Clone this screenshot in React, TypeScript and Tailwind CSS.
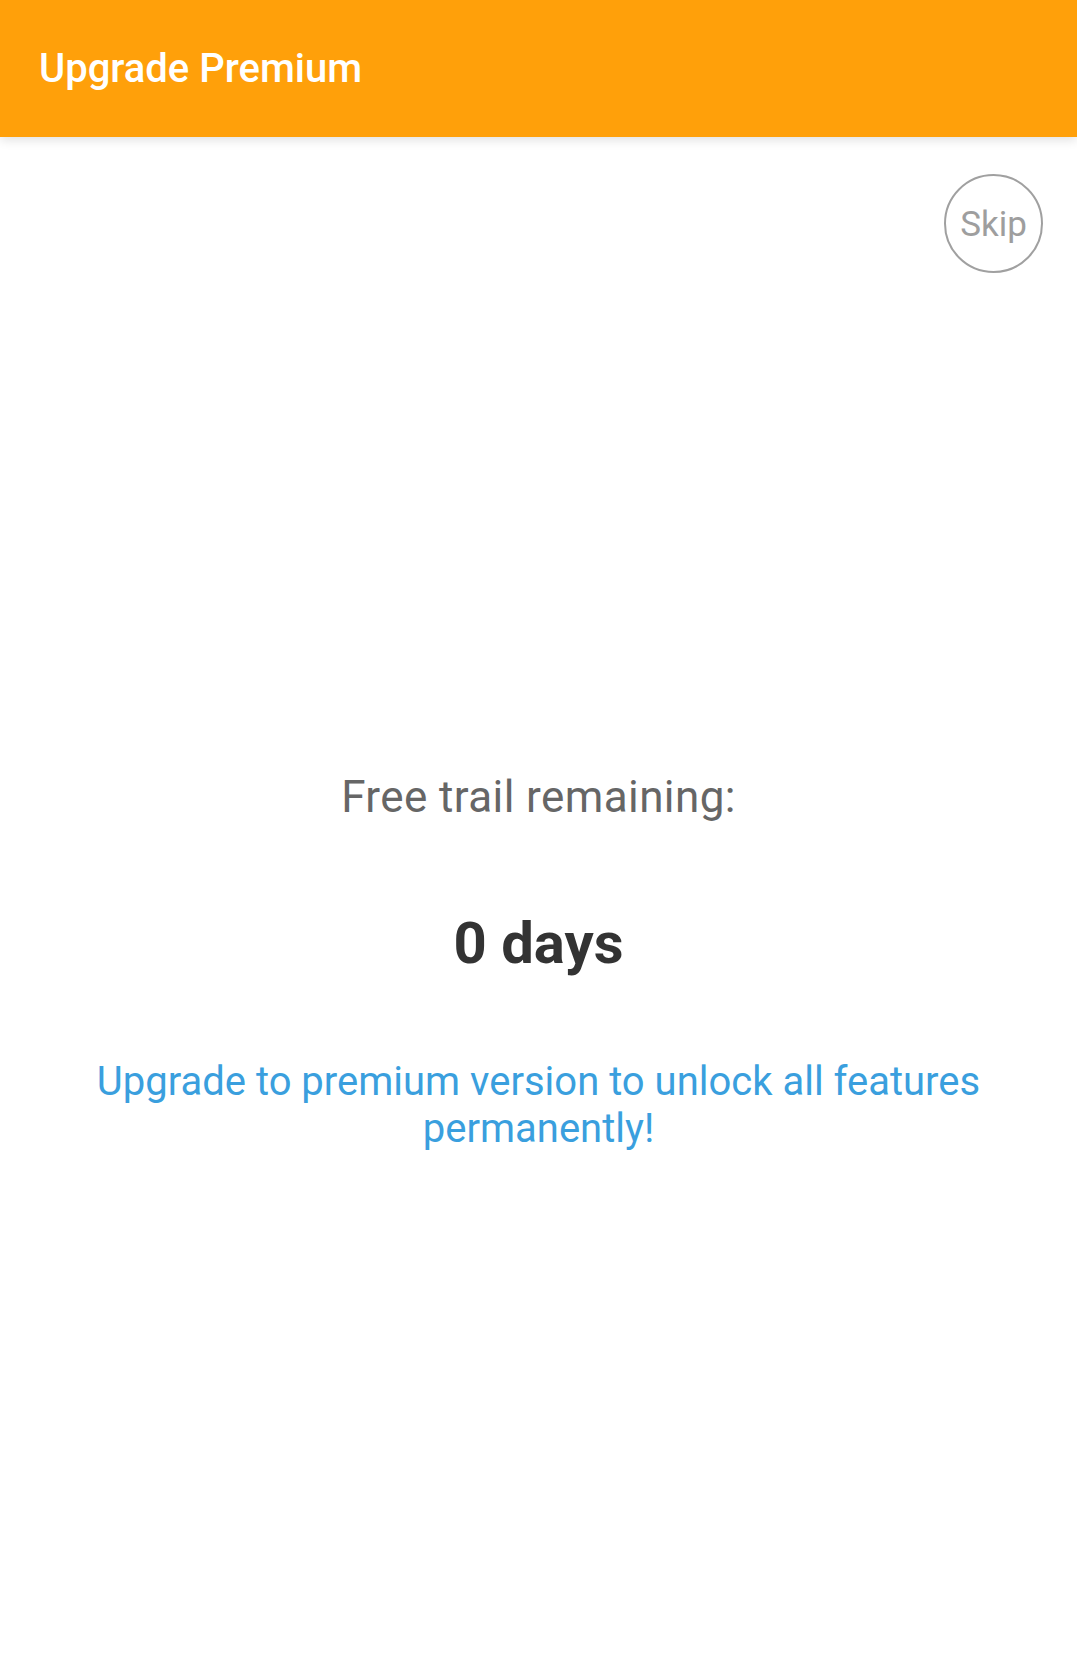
export default function App() {
  return (
    <div className="min-h-screen bg-white font-['Roboto',sans-serif]">
      {/* Toolbar */}
      <header className="h-[137px] bg-[#ffa00a] px-[39px] flex items-center shadow-[0_3px_10px_rgba(0,0,0,0.12)] relative">
        <h1 className="text-white text-[40px] font-medium leading-none">Upgrade Premium</h1>
      </header>

      {/* Skip */}
      <div className="flex justify-end pt-[37px] pr-[34px]">
        <button className="w-[99px] h-[99px] rounded-full border-2 border-[#a0a0a0] flex items-center justify-center pt-[3px] text-[35px] text-[#9e9e9e]">
          Skip
        </button>
      </div>

      {/* Trial info */}
      <div className="flex flex-col items-center text-center">
        <p className="mt-[502px] text-[44px] leading-[44px] tracking-[0.4px] text-[#666666]">Free trail remaining:</p>
        <p className="mt-[95px] text-[58px] leading-[58px] font-bold text-[#333333]">0 days</p>
        <p className="mt-[86px] px-[80px] text-[40px] leading-[47px] text-[#3a9fde]">
          Upgrade to premium version to unlock all features permanently!
        </p>
      </div>
    </div>
  );
}
